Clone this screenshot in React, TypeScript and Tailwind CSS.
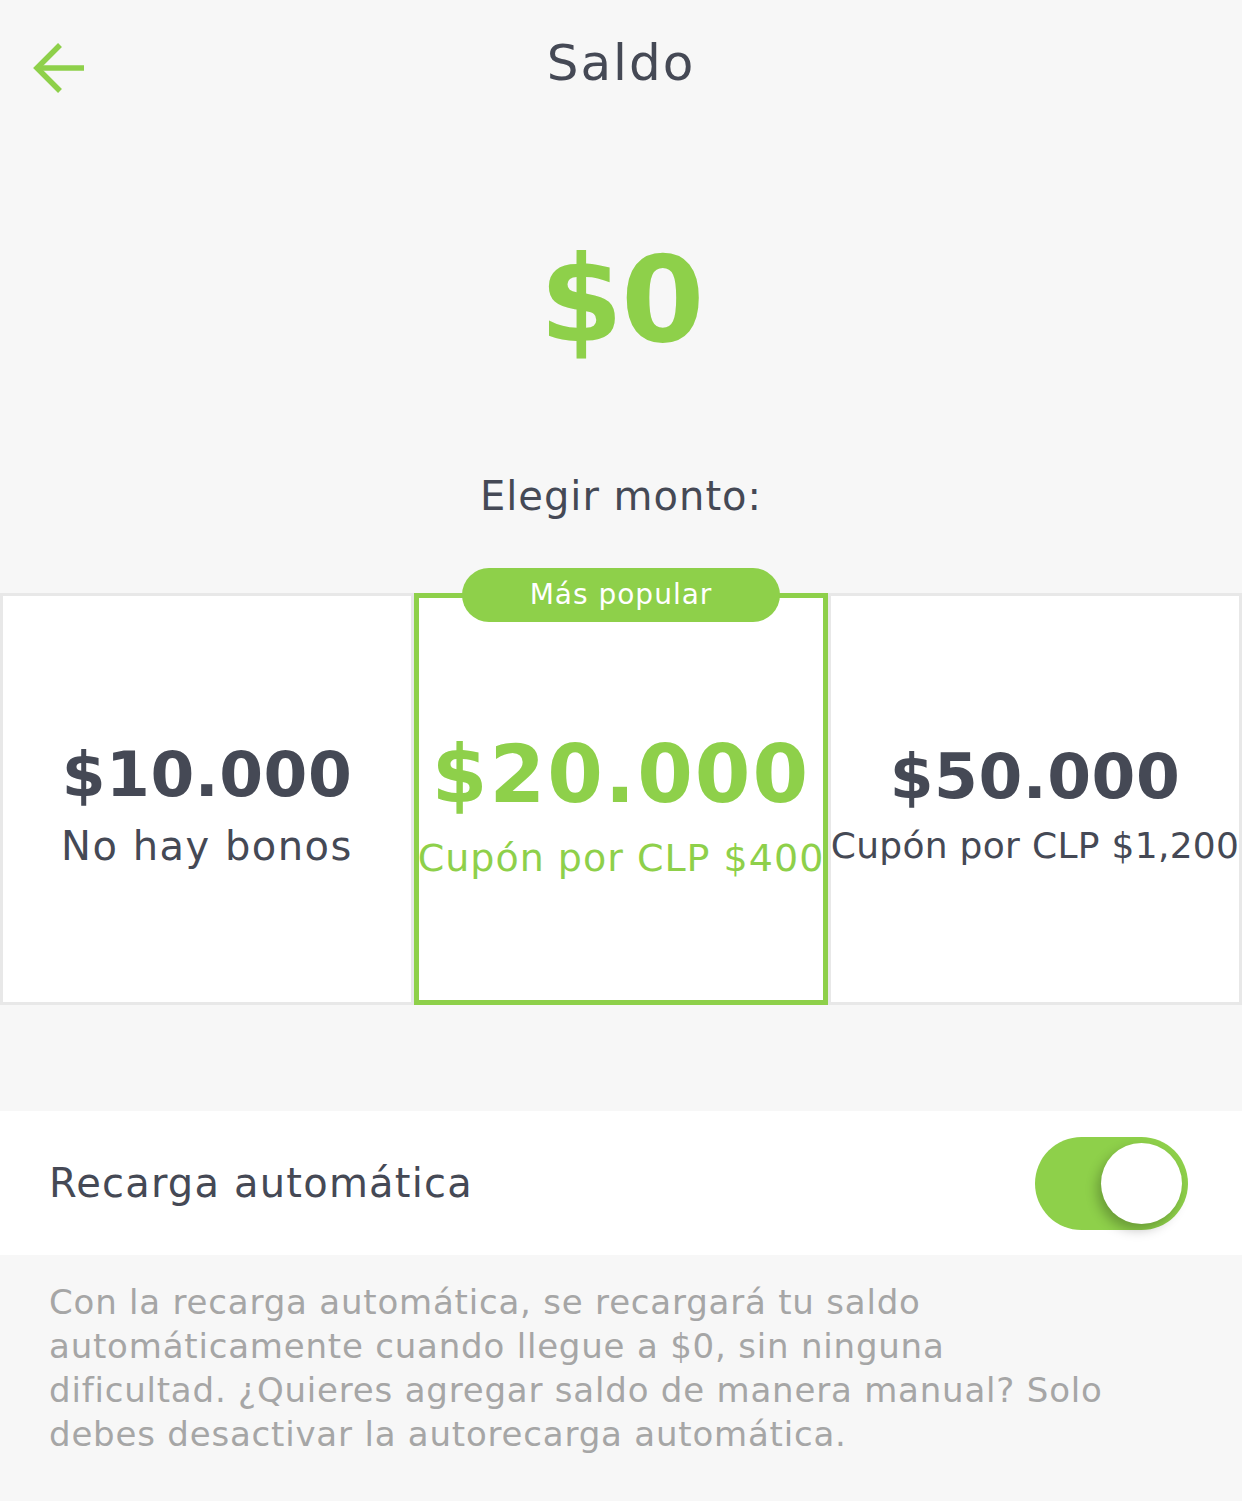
import React from 'react'

const font = { fontFamily: '"DejaVu Sans", "Noto Sans", sans-serif' }

interface Option {
  amount: string
  note: string
  noteClass: string
  popular?: boolean
}

const options: Option[] = [
  { amount: '$10.000', note: 'No hay bonos', noteClass: 'text-[40px] tracking-[1.5px]' },
  { amount: '$20.000', note: 'Cupón por CLP $400', noteClass: 'text-[38px] tracking-[1px]', popular: true },
  { amount: '$50.000', note: 'Cupón por CLP $1,200', noteClass: 'text-[36px] tracking-[0.3px]' },
]

function BackArrow() {
  return (
    <svg width="56" height="56" viewBox="0 0 56 56" fill="none">
      <path d="M52 25H7" stroke="#8ED04A" strokeWidth="5.5" />
      <path d="M28 2L5 25L28 48" stroke="#8ED04A" strokeWidth="5.5" />
    </svg>
  )
}

function AmountCard({ option }: { option: Option }) {
  if (option.popular) {
    return (
      <div className="relative h-[412px] border-[5px] border-[#8ED04A] bg-white flex flex-col items-center justify-center pt-[14px] z-10">
        <div className="absolute -top-[30px] left-1/2 -translate-x-1/2 h-[54px] w-[318px] rounded-full bg-[#8ED04A] flex items-center justify-center">
          <span className="text-[28px] text-white tracking-[1px]">Más popular</span>
        </div>
        <div className="text-[80px] font-bold leading-none text-[#8ED04A] tracking-[2px]">{option.amount}</div>
        <div className={`${option.noteClass} text-[#8ED04A] whitespace-nowrap mt-[24px] leading-none`}>{option.note}</div>
      </div>
    )
  }
  return (
    <div className="h-[412px] border-[3px] border-[#E8E8E8] bg-white flex flex-col items-center justify-center pt-[10px]">
      <div className="text-[63px] font-bold leading-none text-[#454955] tracking-[0.5px]">{option.amount}</div>
      <div className={`${option.noteClass} text-[#454955] whitespace-nowrap mt-[20px] leading-none`}>{option.note}</div>
    </div>
  )
}

export default function App() {
  return (
    <div className="w-[1242px] h-[1501px] bg-[#F7F7F7] overflow-hidden" style={font}>
      {/* Header */}
      <div className="relative h-[128px] flex items-start justify-center pt-[30px]">
        <div className="absolute left-[32px] top-[43px]">
          <BackArrow />
        </div>
        <h1 className="text-[50px] text-[#454955] leading-none mt-[8px] tracking-[2px]">Saldo</h1>
      </div>

      {/* Balance */}
      <div className="flex justify-center mt-[112px]">
        <span className="text-[120px] font-bold text-[#8ED04A] leading-none tracking-[-2px]">$0</span>
      </div>

      <div className="flex justify-center mt-[116px]">
        <span className="text-[40px] text-[#454955] leading-none tracking-[1px]">Elegir monto:</span>
      </div>

      {/* Options */}
      <div className="grid grid-cols-3 mt-[77px]">
        {options.map((option) => (
          <AmountCard key={option.amount} option={option} />
        ))}
      </div>

      {/* Auto recharge */}
      <div className="mt-[106px] h-[144px] bg-white flex items-center justify-between pl-[49px] pr-[54px]">
        <span className="text-[40px] text-[#454955] tracking-[1.2px]">Recarga automática</span>
        <div className="relative w-[153px] h-[93px] rounded-full bg-[#8ED04A]">
          <div className="absolute right-[6px] top-[6px] w-[81px] h-[81px] rounded-full bg-white shadow-[-4px_6px_12px_rgba(0,0,0,0.25)]" />
        </div>
      </div>

      <p className="px-[49px] pt-[25px] text-[34px] leading-[44px] text-[#A6A6A6] tracking-[0.8px] whitespace-nowrap">
        Con la recarga automática, se recargará tu saldo
        <br />
        automáticamente cuando llegue a $0, sin ninguna
        <br />
        dificultad. ¿Quieres agregar saldo de manera manual? Solo
        <br />
        debes desactivar la autorecarga automática.
      </p>
    </div>
  )
}
